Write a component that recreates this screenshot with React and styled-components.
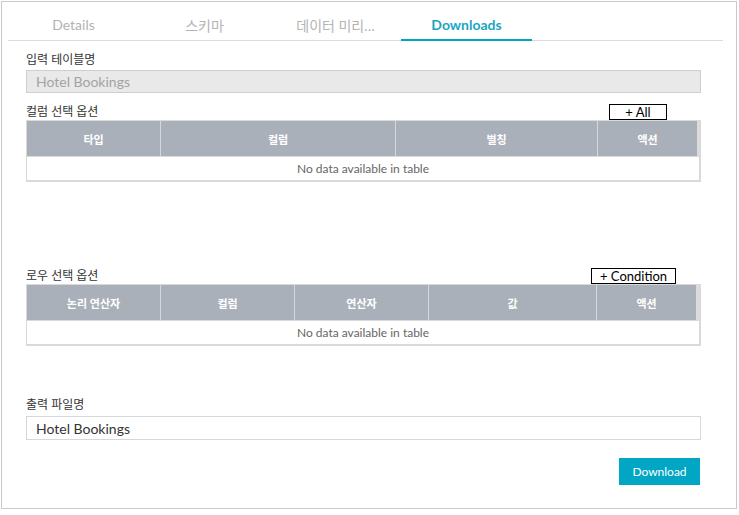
import React from "react";
import styled, { createGlobalStyle } from "styled-components";

const Global = createGlobalStyle`
  html, body { margin: 0; padding: 0; background: #fff; }
  body {
    font-family: "Lato", "Noto Sans CJK KR", sans-serif;
    color: #333;
  }
  * { box-sizing: border-box; }
`;

const Frame = styled.div`
  margin: 1px 0 0 1px;
  width: 736px;
  height: 508px;
  border: 1px solid #c9c9c9;
  display: flex;
  flex-direction: column;
`;

const TabBar = styled.div`
  display: flex;
  margin: 8px 13px 0 6px;
  border-bottom: 1px solid #d6dce0;
`;

const Tab = styled.div`
  width: 131px;
  height: 31px;
  margin-bottom: -1px;
  display: flex;
  align-items: center;
  justify-content: center;
  font-size: 14px;
  font-weight: ${(p) => (p.$active ? 700 : 400)};
  color: ${(p) => (p.$active ? "#1ba5c3" : "#b3b3b3")};
  border-bottom: 2px solid ${(p) => (p.$active ? "#00a5c4" : "transparent")};
  white-space: nowrap;
`;

const Content = styled.div`
  display: flex;
  flex-direction: column;
  padding: 0 35px 0 24px;
`;

const Label = styled.div`
  font-size: 12px;
  line-height: 16px;
  color: #333;
  margin-top: ${(p) => p.$top || 0}px;
  margin-bottom: ${(p) => p.$bottom || 0}px;
`;

const TextBox = styled.div`
  height: ${(p) => p.$h}px;
  border: 1px solid ${(p) => (p.$disabled ? "#cfcfcf" : "#d3d8dc")};
  background: ${(p) => (p.$disabled ? "#e9e9e9" : "#fff")};
  color: ${(p) => (p.$disabled ? "#a3a3a3" : "#333")};
  font-size: 14px;
  padding-left: 9px;
  display: flex;
  align-items: center;
`;

const OptionHeader = styled.div`
  display: flex;
  justify-content: space-between;
  align-items: center;
  height: 17px;
  margin-top: ${(p) => p.$top}px;
`;

const OptionLabel = styled.div`
  font-size: 12px;
  line-height: 16px;
  color: #333;
`;

const SmallButton = styled.button`
  width: ${(p) => p.$w}px;
  height: 16px;
  margin: 1px ${(p) => p.$right}px 0 0;
  padding: 0;
  border: 1px solid #000;
  background: #fff;
  font-family: inherit;
  font-size: 13px;
  line-height: 14px;
  color: #000;
`;

const TableWrap = styled.div`
  border-top: 1px solid #d9d9d9;
  border-left: 1px solid #d9d9d9;
  border-right: 2px solid #d9d9d9;
  border-bottom: 2px solid #d9d9d9;
  background: #dcdcdc;
`;

const HeadRow = styled.div`
  display: flex;
  height: 35px;
`;

const HeadCell = styled.div`
  width: ${(p) => p.$w}px;
  flex: none;
  background: #aab0b9;
  color: #fff;
  font-size: 11px;
  font-weight: 700;
  display: flex;
  align-items: center;
  justify-content: center;
  border-left: ${(p) => (p.$first ? "none" : "1px solid #d8d8d8")};
`;

const EmptyRow = styled.div`
  height: 24px;
  background: #fff;
  border-top: 1px solid #d9d9d9;
  font-size: 12px;
  color: #666;
  display: flex;
  align-items: center;
  justify-content: center;
`;

const Footer = styled.div`
  display: flex;
  justify-content: flex-end;
  margin-top: 18px;
  padding-right: 1px;
`;

const PrimaryButton = styled.button`
  width: 81px;
  height: 27px;
  border: none;
  background: #00a6c4;
  color: #fff;
  font-family: inherit;
  font-size: 12px;
  padding: 0;
`;

function DataTable({ cols }) {
  return (
    <TableWrap>
      <HeadRow>
        {cols.map((c, i) => (
          <HeadCell key={c.name} $w={c.w} $first={i === 0}>
            {c.name}
          </HeadCell>
        ))}
      </HeadRow>
      <EmptyRow>No data available in table</EmptyRow>
    </TableWrap>
  );
}

const colTable = [
  { name: "타입", w: 133 },
  { name: "컬럼", w: 235 },
  { name: "별칭", w: 202 },
  { name: "액션", w: 100 },
];

const rowTable = [
  { name: "논리 연산자", w: 133 },
  { name: "컬럼", w: 134 },
  { name: "연산자", w: 134 },
  { name: "값", w: 168 },
  { name: "액션", w: 100 },
];

export default function App() {
  const tabs = ["Details", "스키마", "데이터 미리…", "Downloads"];
  return (
    <>
      <Global />
      <Frame>
        <TabBar>
          {tabs.map((t) => (
            <Tab key={t} $active={t === "Downloads"}>
              {t}
            </Tab>
          ))}
        </TabBar>
        <Content>
          <Label $top={11} $bottom={2}>입력 테이블명</Label>
          <TextBox $h={23} $disabled>Hotel Bookings</TextBox>

          <OptionHeader $top={10}>
            <OptionLabel>컬럼 선택 옵션</OptionLabel>
            <SmallButton $w={58} $right={34}>+ All</SmallButton>
          </OptionHeader>
          <DataTable cols={colTable} />

          <OptionHeader $top={85}>
            <OptionLabel>로우 선택 옵션</OptionLabel>
            <SmallButton $w={85} $right={25}>+ Condition</SmallButton>
          </OptionHeader>
          <DataTable cols={rowTable} />

          <Label $top={51} $bottom={3}>출력 파일명</Label>
          <TextBox $h={24}>Hotel Bookings</TextBox>

          <Footer>
            <PrimaryButton>Download</PrimaryButton>
          </Footer>
        </Content>
      </Frame>
    </>
  );
}
